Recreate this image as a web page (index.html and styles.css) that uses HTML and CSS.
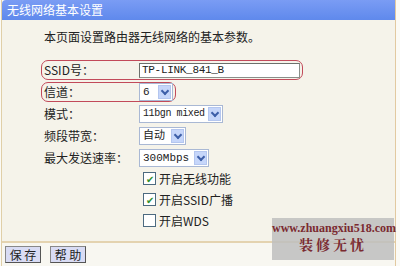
FILE: index.html
```html
<!DOCTYPE html>
<html lang="zh-CN">
<head>
  <meta charset="UTF-8">
  <title>无线网络基本设置</title>
  <link rel="stylesheet" href="styles.css">
</head>
<body>
  <div class="panel">
    <div class="title">无线网络基本设置</div>

    <div class="content">
      <p class="intro">本页面设置路由器无线网络的基本参数。</p>

      <div class="row mark">
        <span class="label">SSID号：</span>
        <div class="textbox">TP-LINK_841_B</div>
      </div>
      <div class="row mark">
        <span class="label">信道：</span>
        <div class="select w-ch"><span class="val">6</span><span class="arrow"></span></div>
      </div>
      <div class="row">
        <span class="label">模式：</span>
        <div class="select w-mode"><span class="val">11bgn mixed</span><span class="arrow"></span></div>
      </div>
      <div class="row">
        <span class="label">频段带宽：</span>
        <div class="select w-bw"><span class="val">自动</span><span class="arrow"></span></div>
      </div>
      <div class="row">
        <span class="label">最大发送速率：</span>
        <div class="select w-rate"><span class="val">300Mbps</span><span class="arrow"></span></div>
      </div>

      <div class="checks">
        <div class="check on">开启无线功能</div>
        <div class="check on">开启SSID广播</div>
        <div class="check">开启WDS</div>
      </div>
    </div>

    <div class="buttons">
      <button>保 存</button>
      <button>帮 助</button>
    </div>
  </div>

  <div class="watermark">
    <div class="wm-url">www.zhuangxiu518.com</div>
    <div class="wm-name">装修无忧</div>
  </div>
</body>
</html>
```

FILE: styles.css
```css
body {
  margin: 0;
  width: 400px;
  height: 266px;
  overflow: hidden;
  background: #fbfaf5;
  font-family: "Noto Sans CJK SC", "Noto Sans", sans-serif;
  font-size: 12px;
  color: #222;
  position: relative;
}
.panel {
  width: 393px;
  margin-left: 1px;
  border-right: 1px solid #e2c9a0;
  border-left: 1px solid #e0cfa8;
}
.title {
  height: 20px;
  line-height: 19px;
  padding-left: 5px;
  color: #fff;
  background: linear-gradient(#7a9cf4, #5f89ec);
  border-radius: 4px 0 0 0;
  font-size: 12px;
}
.content {
  background: #f5f3ea;
  padding: 10px 0 0 39px;
  height: 211px;
  border-bottom: 2px solid #e4d3b0;
}
.intro {
  margin: 0 0 16px 3px;
  line-height: 14px;
}
.row {
  display: flex;
  align-items: center;
  width: fit-content;
  height: 18px;
  padding: 0 2px;
  margin-bottom: 2px;
  border: 1px solid transparent;
  border-radius: 7px;
}
.row.mark {
  border-color: #c24a5a;
}
.label {
  width: 95px;
  line-height: 14px;
}
.textbox {
  width: 155px;
  height: 13px;
  line-height: 13px;
  padding: 0 2px;
  background: #fff;
  border: 1px solid #8a8f8a;
  border-top-color: #6c706c;
  border-left-color: #6c706c;
  font-family: "Liberation Mono", monospace;
  font-size: 11px;
  letter-spacing: -0.3px;
}
.select {
  display: flex;
  align-items: center;
  height: 16px;
  background: #fff;
  border: 1px solid #a9b8d4;
  white-space: nowrap;
}
.val {
  flex: 1;
  padding-left: 3px;
  font-family: "Liberation Mono", "Noto Sans CJK SC", monospace;
  font-size: 11px;
  line-height: 14px;
}
.w-mode .val {
  font-size: 10px;
  letter-spacing: -0.4px;
}
.arrow {
  width: 13px;
  height: 14px;
  margin-right: 1px;
  background: #c6d6fa;
  border: 1px solid #b4c6ef;
  box-sizing: border-box;
  position: relative;
}
.arrow::after {
  content: "";
  position: absolute;
  left: 3px;
  top: 2px;
  width: 4px;
  height: 4px;
  border-right: 2px solid #3d5fa8;
  border-bottom: 2px solid #3d5fa8;
  transform: rotate(45deg);
}
.w-ch { width: 32px; }
.w-mode { width: 82px; }
.w-bw { width: 45px; }
.w-rate { width: 68px; }
.checks {
  margin: 2px 0 0 102px;
  display: flex;
  flex-direction: column;
  gap: 5px;
}
.check {
  display: flex;
  align-items: center;
  height: 16px;
}
.check::before {
  content: "";
  width: 11px;
  height: 11px;
  margin-right: 3px;
  background: #fff;
  border: 1px solid #4c6a80;
}
.check.on::before {
  content: "✔";
  font-size: 10px;
  line-height: 11px;
  text-align: center;
  color: #2f8f2f;
}
.buttons {
  height: 21px;
  padding: 3px 0 0 3px;
  display: flex;
  gap: 9px;
  border-bottom: 1px solid #d9c7a6;
  background: #f8f7f1;
}
button {
  width: 36px;
  height: 17px;
  padding: 0;
  font-family: "Noto Sans CJK SC", sans-serif;
  font-size: 12px;
  line-height: 14px;
  color: #222;
  background: #d9dcf4;
  border: 1px solid #555;
  border-top-color: #888;
  border-left-color: #888;
}
.watermark {
  position: absolute;
  left: 272px;
  top: 218px;
  width: 122px;
  height: 42px;
  background: rgba(190, 190, 190, 0.85);
  color: #7a2a30;
  font-family: "Liberation Serif", "Noto Serif CJK SC", serif;
  font-weight: bold;
  text-align: center;
}
.wm-url {
  font-size: 12px;
  line-height: 18px;
  margin-top: 1px;
}
.wm-name {
  font-size: 14px;
  line-height: 18px;
  letter-spacing: 3px;
}
```
